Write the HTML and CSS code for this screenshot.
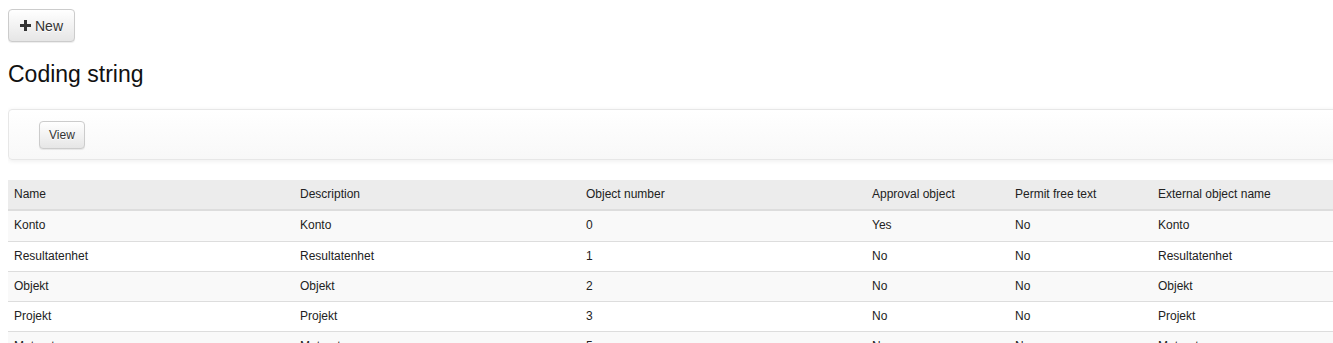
FILE: index.html
```html
<!DOCTYPE html>
<html lang="en">
<head>
  <meta charset="UTF-8">
  <meta name="viewport" content="width=device-width, initial-scale=1.0">
  <title>Coding string</title>
  <link rel="stylesheet" href="styles.css">
</head>
<body>
  <div class="page">
    <div class="toolbar">
      <button class="btn btn-new">
        <svg class="icon-plus" width="11" height="11" viewBox="0 0 11 11">
          <rect x="4" y="0" width="3" height="11" fill="#333"/>
          <rect x="0" y="4" width="11" height="3" fill="#333"/>
        </svg>
        New
      </button>
    </div>

    <h2 class="page-title">Coding string</h2>

    <div class="filter-panel">
      <button class="btn btn-sm">View</button>
    </div>

    <table class="grid">
      <colgroup>
        <col class="col-wide">
        <col class="col-wide">
        <col class="col-wide">
        <col class="col-narrow">
        <col class="col-narrow">
        <col class="col-wide">
      </colgroup>
      <thead>
        <tr>
          <th>Name</th>
          <th>Description</th>
          <th>Object number</th>
          <th>Approval object</th>
          <th>Permit free text</th>
          <th>External object name</th>
        </tr>
      </thead>
      <tbody>
        <tr>
          <td>Konto</td>
          <td>Konto</td>
          <td>0</td>
          <td>Yes</td>
          <td>No</td>
          <td>Konto</td>
        </tr>
        <tr>
          <td>Resultatenhet</td>
          <td>Resultatenhet</td>
          <td>1</td>
          <td>No</td>
          <td>No</td>
          <td>Resultatenhet</td>
        </tr>
        <tr>
          <td>Objekt</td>
          <td>Objekt</td>
          <td>2</td>
          <td>No</td>
          <td>No</td>
          <td>Objekt</td>
        </tr>
        <tr>
          <td>Projekt</td>
          <td>Projekt</td>
          <td>3</td>
          <td>No</td>
          <td>No</td>
          <td>Projekt</td>
        </tr>
        <tr>
          <td>Motpart</td>
          <td>Motpart</td>
          <td>5</td>
          <td>No</td>
          <td>No</td>
          <td>Motpart</td>
        </tr>
      </tbody>
    </table>
  </div>
</body>
</html>
```
FILE: styles.css
```css
html {
  overflow: hidden;
}

body {
  margin: 8px 0 0 8px;
  font-family: "Liberation Sans", Arial, sans-serif;
  color: #333;
  background-color: #fff;
}

.page {
  width: 1430px;
}

.toolbar {
  padding-top: 1px;
  display: flex;
}

.btn {
  font-family: "Liberation Sans", Arial, sans-serif;
  color: #333;
  background-color: #fff;
  background-image: linear-gradient(to bottom, #fff 0, #e6e6e6 100%);
  border: 1px solid #ccc;
  border-radius: 4px;
  box-shadow: 0 1px 1px rgba(0, 0, 0, 0.075);
  text-shadow: 0 1px 0 #fff;
  cursor: pointer;
}

.btn-new {
  display: flex;
  align-items: center;
  gap: 4px;
  height: 33px;
  padding: 0 11px;
  font-size: 14px;
}

.icon-plus {
  display: block;
  margin-top: -1px;
}

.btn-sm {
  font-size: 12px;
  line-height: 18px;
  padding: 4px 9px;
}

.page-title {
  margin: 19px 0 22px;
  font-size: 23px;
  line-height: 26px;
  font-weight: normal;
  color: #111;
}

.filter-panel {
  padding: 11px 30px 10px;
  border: 1px solid #e7e7e7;
  border-radius: 4px;
  background-image: linear-gradient(to bottom, #fff 0, #f8f8f8 100%);
  box-shadow: 0 1px 5px rgba(0, 0, 0, 0.075);
}

.grid {
  width: 100%;
  margin-top: 20px;
  border-collapse: collapse;
  table-layout: fixed;
  font-size: 12px;
  color: #222;
}

.col-wide {
  width: 20%;
}

.col-narrow {
  width: 10%;
}

.grid th,
.grid td {
  padding: 6px;
  line-height: 17px;
  text-align: left;
  white-space: nowrap;
}

.grid th {
  font-weight: normal;
  background-color: #ececec;
  border-bottom: 2px solid #ddd;
}

.grid td {
  border-top: 1px solid #ddd;
}

.grid tbody tr:first-child td {
  padding-bottom: 7px;
}

.grid tbody tr:nth-child(odd) {
  background-color: #f9f9f9;
}
```
